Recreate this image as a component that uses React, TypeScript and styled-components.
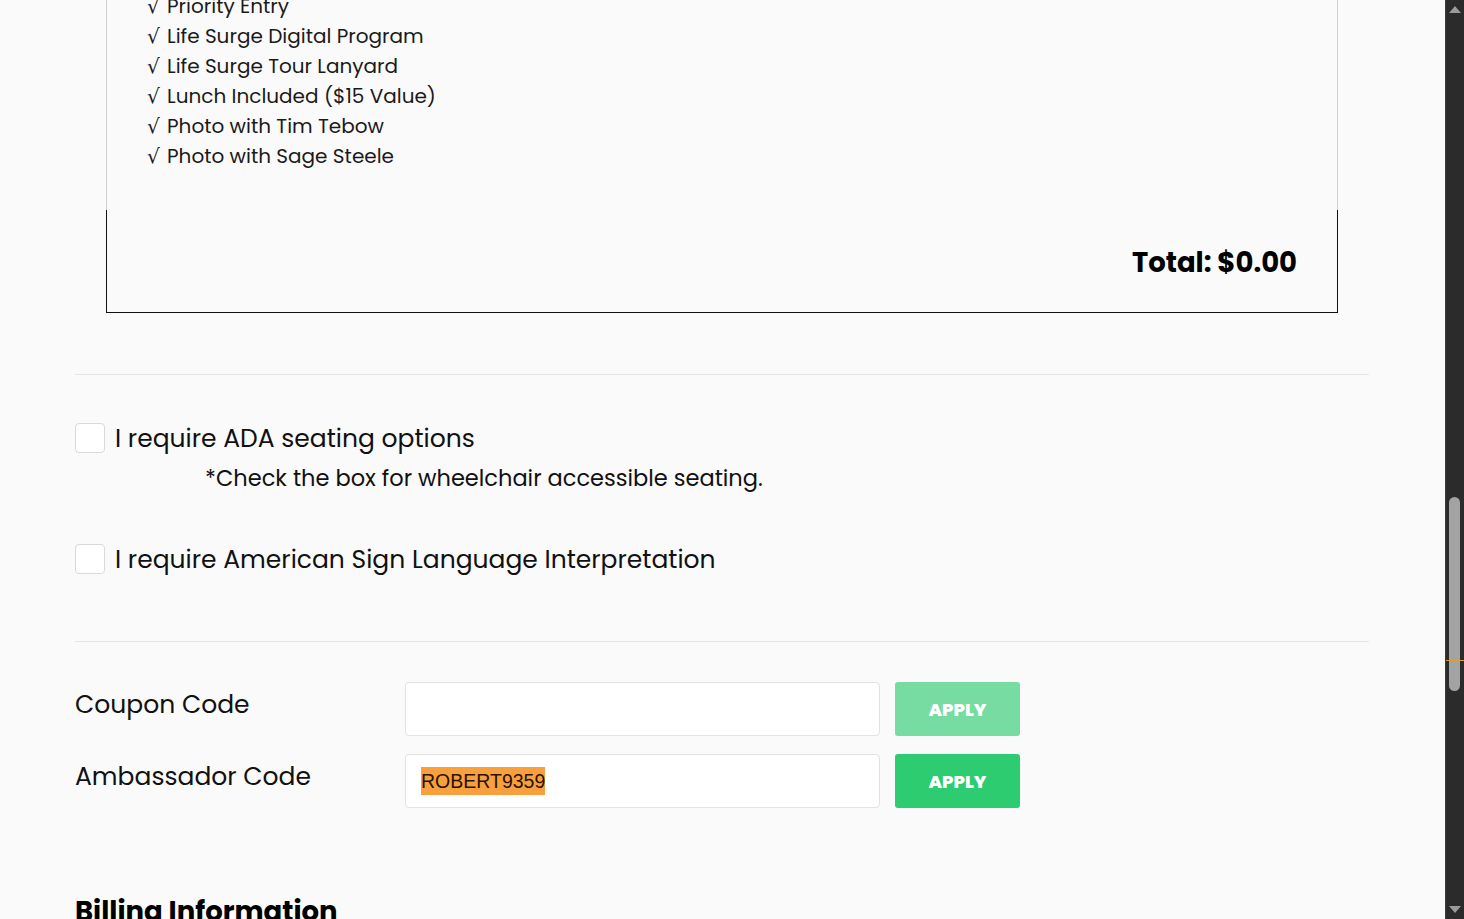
import styled, { createGlobalStyle } from 'styled-components'

const GlobalStyle = createGlobalStyle`
  html, body {
    margin: 0;
    padding: 0;
    height: 100%;
    overflow: hidden;
  }
  body {
    background: #fafafa;
    font-family: 'Poppins', 'Open Sans', 'DejaVu Sans', sans-serif;
    color: #111;
  }
`

const Frame = styled.div`
  display: flex;
  width: 1464px;
  height: 919px;
  overflow: hidden;
`

const Main = styled.main`
  flex: 1;
  overflow: hidden;
  background: #fafafa;
`

const Content = styled.div`
  margin-top: -9px;
  padding: 0 76px 0 75px;
`

const Summary = styled.div`
  margin: 0 31px 0 31px;
`

const PerksBox = styled.div`
  border-left: 1px solid #cfcfcf;
  border-right: 1px solid #cfcfcf;
  padding: 0 40px 39px;
`

const PerkList = styled.ul`
  list-style: none;
  margin: 0;
  padding: 0;
`

const Perk = styled.li`
  height: 30px;
  font-size: 20px;
  line-height: 30px;
  color: #1a1a1a;

  &::before {
    content: '√';
    display: inline-block;
    width: 20px;
    line-height: 0;
    font-family: 'DejaVu Sans', sans-serif;
    font-size: 20px;
  }
`

const TotalBox = styled.div`
  display: flex;
  align-items: center;
  justify-content: flex-end;
  height: 103px;
  padding: 3px 40px 0 0;
  box-sizing: border-box;
  border: 1px solid #111;
  border-top: none;
`

const Total = styled.div`
  font-size: 27.5px;
  font-weight: 700;
  color: #000;
`

const Divider = styled.hr<{ $top: number }>`
  margin: ${(p) => p.$top}px 0 0;
  border: none;
  border-top: 1px solid #e6e6e6;
`

const Options = styled.div`
  display: flex;
  flex-direction: column;
  padding-top: 49px;
  padding-bottom: 66px;
`

const OptionRow = styled.label<{ $gap?: number }>`
  display: flex;
  align-items: center;
  gap: 10px;
  margin-top: ${(p) => p.$gap ?? 0}px;
  font-size: 25px;
  line-height: 30px;
  cursor: pointer;
`

const Box = styled.span`
  width: 28px;
  height: 28px;
  margin-top: -3px;
  border: 1px solid #d9d9d9;
  border-radius: 4px;
  background: #fff;
  flex-shrink: 0;
`

const Note = styled.div`
  margin: 9px 0 0 130px;
  font-size: 22.5px;
  line-height: 30px;
`

const Codes = styled.div`
  display: flex;
  flex-direction: column;
  gap: 18px;
  padding-top: 40px;
`

const CodeRow = styled.div`
  display: grid;
  grid-template-columns: 315px 475px 125px;
  column-gap: 15px;
  align-items: start;
`

const CodeLabel = styled.div`
  font-size: 25px;
  line-height: 46px;
`

const Field = styled.div`
  display: flex;
  align-items: center;
  height: 52px;
  padding: 0 15px;
  background: #fff;
  border: 1px solid #e2e2e2;
  border-radius: 4px;
`

const Autofill = styled.span`
  background: #f8a03e;
  font-family: 'Liberation Sans', Arial, sans-serif;
  font-size: 19.5px;
  line-height: 28px;
  color: #2a1200;
`

const ApplyButton = styled.button<{ $dim?: boolean }>`
  height: 54px;
  border: none;
  border-radius: 3px;
  background: ${(p) => (p.$dim ? '#77dca2' : '#2ecc71')};
  color: #fff;
  font-family: inherit;
  font-size: 18px;
  font-weight: 800;
`

const Heading = styled.h2`
  margin: 83px 0 0;
  font-size: 27.5px;
  font-weight: 700;
  color: #000;
`

const Scrollbar = styled.div`
  position: relative;
  box-sizing: border-box;
  width: 19px;
  background: #2b2b2b;
  border-left: 1px solid #3a3a3a;
  display: flex;
  flex-direction: column;
  align-items: center;
  justify-content: space-between;
  padding: 6px 0;
`

const Arrow = styled.span<{ $down?: boolean }>`
  width: 0;
  height: 0;
  border-left: 6px solid transparent;
  border-right: 6px solid transparent;
  ${(p) =>
    p.$down ? 'border-top: 7px solid #9a9a9a;' : 'border-bottom: 7px solid #9a9a9a;'}
`

const Thumb = styled.span`
  position: absolute;
  top: 497px;
  left: 3px;
  width: 11px;
  height: 194px;
  background: #a3a3a3;
  border-radius: 6px;
`

const Marker = styled.span`
  position: absolute;
  top: 660px;
  left: 0;
  right: 0;
  height: 1px;
  background: #d9a023;
`

const perks = [
  'Priority Entry',
  'Life Surge Digital Program',
  'Life Surge Tour Lanyard',
  'Lunch Included ($15 Value)',
  'Photo with Tim Tebow',
  'Photo with Sage Steele',
]

export default function App() {
  return (
    <>
      <GlobalStyle />
      <Frame>
        <Main>
          <Content>
            <Summary>
              <PerksBox>
                <PerkList>
                  {perks.map((p) => (
                    <Perk key={p}>{p}</Perk>
                  ))}
                </PerkList>
              </PerksBox>
              <TotalBox>
                <Total>Total: $0.00</Total>
              </TotalBox>
            </Summary>

            <Divider $top={61} />

            <Options>
              <OptionRow>
                <Box />
                I require ADA seating options
              </OptionRow>
              <Note>*Check the box for wheelchair accessible seating.</Note>
              <OptionRow $gap={52}>
                <Box />
                I require American Sign Language Interpretation
              </OptionRow>
            </Options>

            <Divider $top={0} />

            <Codes>
              <CodeRow>
                <CodeLabel>Coupon Code</CodeLabel>
                <Field />
                <ApplyButton $dim>APPLY</ApplyButton>
              </CodeRow>
              <CodeRow>
                <CodeLabel>Ambassador Code</CodeLabel>
                <Field>
                  <Autofill>ROBERT9359</Autofill>
                </Field>
                <ApplyButton>APPLY</ApplyButton>
              </CodeRow>
            </Codes>

            <Heading>Billing Information</Heading>
          </Content>
        </Main>
        <Scrollbar>
          <Arrow />
          <Thumb />
          <Marker />
          <Arrow $down />
        </Scrollbar>
      </Frame>
    </>
  )
}
